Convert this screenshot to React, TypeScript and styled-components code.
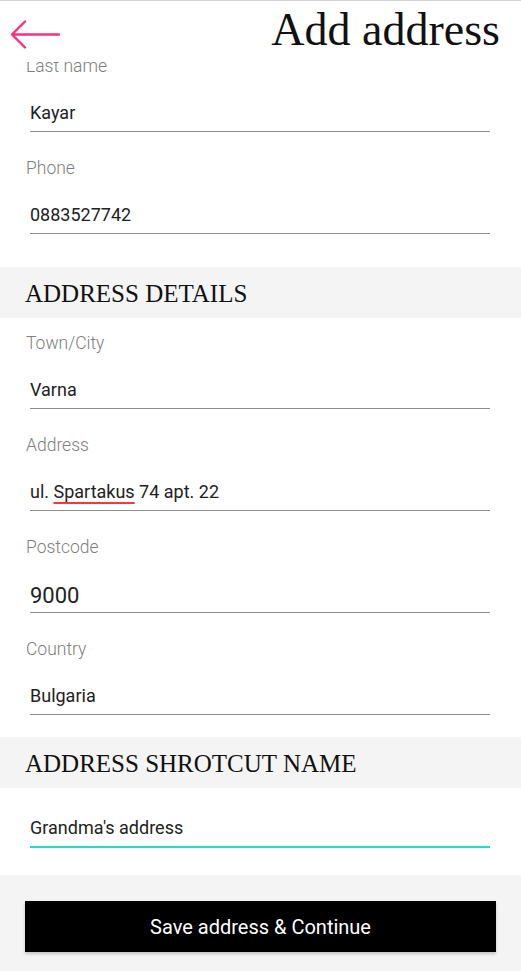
import React from 'react';
import styled, { createGlobalStyle } from 'styled-components';

const GlobalStyle = createGlobalStyle`
  html, body {
    margin: 0;
    padding: 0;
    background: #ffffff;
  }
  * {
    box-sizing: border-box;
  }
`;

const Screen = styled.div`
  width: 521px;
  height: 971px;
  display: flex;
  flex-direction: column;
  background: #ffffff;
  border-top: 1px solid #d2d2d2;
  overflow: hidden;
  font-family: Roboto, 'Liberation Sans', sans-serif;
`;

const Header = styled.div`
  height: 61px;
  flex-shrink: 0;
  display: flex;
  flex-direction: row;
  align-items: flex-start;
  justify-content: space-between;
  padding: 4px 21px 0 10px;
  background: #ffffff;
  position: relative;
  z-index: 2;
`;

const BackButton = styled.button`
  border: none;
  background: none;
  padding: 0;
  margin-top: 14px;
  width: 50px;
  height: 32px;
  display: flex;
  align-items: center;
  cursor: pointer;
`;

const Title = styled.h1`
  margin: 0;
  font-family: 'Liberation Serif', 'DejaVu Serif', serif;
  font-weight: 400;
  font-size: 46px;
  line-height: 50px;
  color: #111111;
`;

const Clip = styled.div`
  overflow: hidden;
`;

const Group = styled.div<{ $shift?: number; $extra?: number }>`
  margin-top: ${(p) => (p.$shift ? `${p.$shift}px` : '0')};
  padding-bottom: ${(p) => p.$extra || 0}px;
  background: #ffffff;
`;

const Field = styled.div`
  padding: 15px 0 11px 0;
  display: flex;
  flex-direction: column;
`;

const Label = styled.div`
  padding-left: 26px;
  font-size: 17.5px;
  font-weight: 300;
  line-height: 20px;
  color: #7e7e7e;
`;

const Value = styled.div<{ $big?: boolean }>`
  margin-top: 25px;
  padding-left: 30px;
  font-size: ${(p) => (p.$big ? '22px' : '18px')};
  line-height: 24px;
  color: #222222;
  ${(p) => p.$big && 'position: relative; top: 2px;'}
`;

const Underline = styled.div<{ $active?: boolean }>`
  margin: 6px 31px 0 30px;
  height: ${(p) => (p.$active ? '2px' : '1px')};
  background: ${(p) => (p.$active ? '#22dcc4' : '#8c8c8c')};
`;

const Misspelled = styled.span`
  text-decoration: underline;
  text-decoration-color: #f03a3f;
  text-decoration-thickness: 2px;
  text-underline-offset: 4px;
`;

const Band = styled.div`
  height: 51px;
  flex-shrink: 0;
  display: flex;
  align-items: center;
  padding: 3px 0 0 25px;
  background: #f4f4f4;
  font-family: 'Liberation Serif', 'DejaVu Serif', serif;
  font-size: 25px;
  color: #111111;
`;

const ShortcutBox = styled.div`
  padding: 28px 0 27px 0;
  background: #ffffff;
`;

const Footer = styled.div`
  flex: 1;
  background: #f4f4f4;
  padding: 26px 25px 19px 25px;
`;

const SaveButton = styled.button`
  width: 471px;
  height: 51px;
  border: none;
  background: #000000;
  color: #ffffff;
  font-family: Roboto, 'Liberation Sans', sans-serif;
  font-size: 20px;
  box-shadow: 0 2px 3px rgba(0, 0, 0, 0.2);
  cursor: pointer;
`;

const BackArrow = () => (
  <svg width="50" height="32" viewBox="0 0 50 32" fill="none">
    <path
      d="M2 15.5 H49 M15 2.5 L2 15.5 L15 28.5"
      stroke="#ff2d7f"
      strokeWidth="2.4"
      strokeLinecap="round"
      strokeLinejoin="round"
    />
  </svg>
);

type FieldData = { label: string; value: React.ReactNode; big?: boolean };

const contactFields: FieldData[] = [
  { label: 'Last name', value: 'Kayar' },
  { label: 'Phone', value: '0883527742' },
];

const addressFields: FieldData[] = [
  { label: 'Town/City', value: 'Varna' },
  {
    label: 'Address',
    value: (
      <>
        ul. <Misspelled>Spartakus</Misspelled> 74 apt. 22
      </>
    ),
  },
  { label: 'Postcode', value: '9000', big: true },
  { label: 'Country', value: 'Bulgaria' },
];

const renderField = (f: FieldData) => (
  <Field key={f.label}>
    <Label>{f.label}</Label>
    <Value $big={f.big}>{f.value}</Value>
    <Underline />
  </Field>
);

const App = () => {
  return (
    <>
      <GlobalStyle />
      <Screen>
        <Header>
          <BackButton aria-label="Back">
            <BackArrow />
          </BackButton>
          <Title>Add address</Title>
        </Header>
        <Clip>
          <Group $shift={-21} $extra={23}>
            {contactFields.map(renderField)}
          </Group>
        </Clip>
        <Band>ADDRESS DETAILS</Band>
        <Group $extra={11}>{addressFields.map(renderField)}</Group>
        <Band>ADDRESS SHROTCUT NAME</Band>
        <ShortcutBox>
          <Value style={{ marginTop: 0 }}>Grandma's address</Value>
          <Underline $active />
        </ShortcutBox>
        <Footer>
          <SaveButton>Save address &amp; Continue</SaveButton>
        </Footer>
      </Screen>
    </>
  );
};

export default App;
